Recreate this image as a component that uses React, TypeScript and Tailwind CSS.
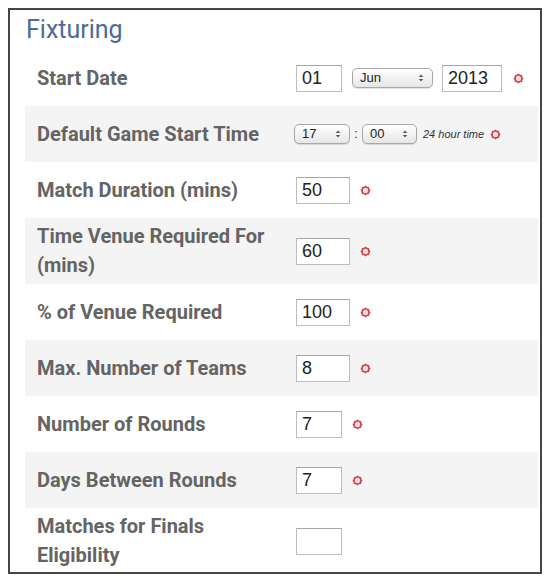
import type { ReactNode } from 'react';

const Required = () => (
  <svg width="11" height="11" viewBox="0 0 10 10" className="shrink-0">
    <polygon
      points="9.6,5 8.51,6.45 8.25,8.25 6.45,8.51 5,9.6 3.55,8.51 1.75,8.25 1.49,6.45 0.4,5 1.49,3.55 1.75,1.75 3.55,1.49 5,0.4 6.45,1.49 8.25,1.75 8.51,3.55"
      fill="#cf4448"
    />
    <circle cx="5" cy="5" r="2.4" fill="#f8dcdc" />
  </svg>
);

const Box = ({ value, width }: { value: string; width: string }) => (
  <div
    className={`${width} h-[27px] shrink-0 border border-[#bdbdbd] border-t-[#a6a6a6] bg-white pl-[5px] flex items-center text-[18px] text-[#222] font-['Liberation_Sans',Arial,sans-serif]`}
  >
    {value}
  </div>
);

const Select = ({ value, width }: { value: string; width: string }) => (
  <div
    className={`${width} h-[20px] shrink-0 rounded-[5px] border border-[#a8a8a8] bg-linear-to-b from-white to-[#e6e6e6] shadow-[0_1px_1px_rgba(0,0,0,0.12)] flex items-center justify-between pl-[7px] pr-[8px] text-[13px] text-[#222] font-['Liberation_Sans',Arial,sans-serif]`}
  >
    <span>{value}</span>
    <svg width="6" height="10" viewBox="0 0 6 10">
      <path d="M0.8 4 L3 1.4 L5.2 4 Z" fill="#555" />
      <path d="M0.8 6 L3 8.6 L5.2 6 Z" fill="#555" />
    </svg>
  </div>
);

const Row = ({ label, gray, children }: { label: string; gray?: boolean; children?: ReactNode }) => (
  <div className={`flex items-center min-h-[56px] py-[4px] ${gray ? 'bg-[#f4f4f4]' : 'bg-white'}`}>
    <div className="w-[271px] shrink-0 pl-3 pr-[19px] text-[20px] leading-[29px] font-bold text-[#646464] font-['Roboto',sans-serif]">
      {label}
    </div>
    <div className="flex items-center">{children}</div>
  </div>
);

export default function App() {
  return (
    <div className="w-[558px] h-[583px] bg-white pt-2 pl-2">
      <div className="w-[534px] h-[566px] border-2 border-[#464646] overflow-hidden pl-[15px] pr-[2px]">
        <h2 className="h-[40px] flex items-center pl-px text-[25px] text-[#4c6b95] font-['Roboto',sans-serif]">
          Fixturing
        </h2>

        <Row label="Start Date">
          <Box value="01" width="w-[46px]" />
          <div className="ml-[10px]">
            <Select value="Jun" width="w-[81px]" />
          </div>
          <div className="ml-[9px]">
            <Box value="2013" width="w-[60px]" />
          </div>
          <div className="ml-[11px]">
            <Required />
          </div>
        </Row>

        <Row label="Default Game Start Time" gray>
          <div className="-ml-[2px] flex items-center">
            <Select value="17" width="w-[56px]" />
            <span className="w-[12px] text-center text-[13px] text-[#333] font-['Liberation_Sans',Arial,sans-serif]">:</span>
            <Select value="00" width="w-[55px]" />
            <span className="ml-[6px] text-[11px] italic text-[#333] font-['Liberation_Sans',Arial,sans-serif]">
              24 hour time
            </span>
            <div className="ml-[6px]">
              <Required />
            </div>
          </div>
        </Row>

        <Row label="Match Duration (mins)">
          <Box value="50" width="w-[54px]" />
          <div className="ml-[10px]">
            <Required />
          </div>
        </Row>

        <Row label="Time Venue Required For (mins)" gray>
          <Box value="60" width="w-[54px]" />
          <div className="ml-[10px]">
            <Required />
          </div>
        </Row>

        <Row label="% of Venue Required">
          <Box value="100" width="w-[54px]" />
          <div className="ml-[10px]">
            <Required />
          </div>
        </Row>

        <Row label="Max. Number of Teams" gray>
          <Box value="8" width="w-[54px]" />
          <div className="ml-[10px]">
            <Required />
          </div>
        </Row>

        <Row label="Number of Rounds">
          <Box value="7" width="w-[46px]" />
          <div className="ml-[10px]">
            <Required />
          </div>
        </Row>

        <Row label="Days Between Rounds" gray>
          <Box value="7" width="w-[46px]" />
          <div className="ml-[10px]">
            <Required />
          </div>
        </Row>

        <Row label="Matches for Finals Eligibility">
          <Box value="" width="w-[46px]" />
        </Row>
      </div>
    </div>
  );
}
